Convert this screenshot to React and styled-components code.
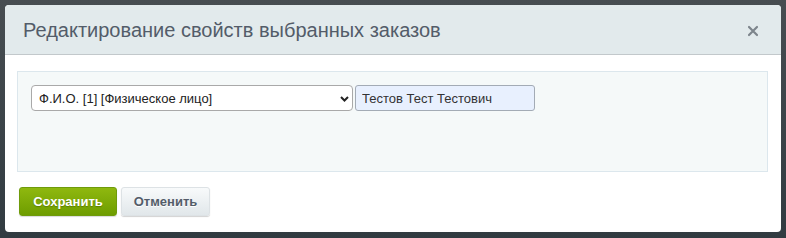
import React from 'react';
import styled, { createGlobalStyle } from 'styled-components';

const GlobalStyle = createGlobalStyle`
  html, body {
    margin: 0;
    padding: 0;
    background: linear-gradient(#474d51, #313b41);
    font-family: "Liberation Sans", Arial, sans-serif;
  }
`;

const Page = styled.div`
  width: 786px;
  height: 238px;
  box-sizing: border-box;
  padding: 5px 5px 0 5px;
`;

const Dialog = styled.div`
  width: 776px;
  height: 227px;
  background: #fff;
  border-radius: 4px;
  overflow: hidden;
  display: flex;
  flex-direction: column;
`;

const Header = styled.div`
  height: 49px;
  flex: none;
  display: flex;
  align-items: center;
  justify-content: space-between;
  padding: 0 22px 0 18px;
  background: #e2eaec;
  border-bottom: 1px solid #c2c8cb;
`;

const Title = styled.h1`
  margin: 0;
  font-size: 20px;
  font-weight: normal;
  color: #535c69;
  line-height: 1;
`;

const Close = styled.button`
  border: none;
  background: none;
  padding: 0;
  width: 12px;
  height: 12px;
  margin-top: 2px;
  display: flex;
  cursor: pointer;
`;

const Body = styled.div`
  padding: 16px 13px 0 12px;
`;

const Panel = styled.div`
  height: 99px;
  box-sizing: content-box;
  background: #f5f9f9;
  border: 1px solid #dce7ed;
  padding: 0 13px;
  display: flex;
  align-items: flex-start;
`;

const Row = styled.div`
  display: flex;
  gap: 2px;
  margin-top: 13px;
`;

const SelectWrap = styled.div`
  position: relative;
  width: 322px;
  height: 26px;
`;

const Select = styled.select`
  appearance: none;
  width: 100%;
  height: 100%;
  box-sizing: border-box;
  border: 1px solid #a9a9a9;
  border-radius: 4px;
  background: #fff;
  padding: 0 24px 0 7px;
  font-family: "Liberation Sans", Arial, sans-serif;
  font-size: 13px;
  color: #222;
  outline: none;
`;

const Chevron = styled.svg`
  position: absolute;
  right: 4px;
  top: 11px;
  pointer-events: none;
`;

const Input = styled.input`
  width: 180px;
  height: 26px;
  box-sizing: border-box;
  border: 1px solid #a3abb5;
  border-radius: 3px;
  background: #e8f0fe;
  padding: 0 6px;
  font-family: "Liberation Sans", Arial, sans-serif;
  font-size: 13px;
  color: #333;
  outline: none;
`;

const Buttons = styled.div`
  display: flex;
  gap: 4px;
  padding: 15px 0 0 14px;
`;

const Button = styled.button`
  height: 29px;
  box-sizing: border-box;
  border-radius: 3px;
  font-family: "Liberation Sans", Arial, sans-serif;
  font-size: 13px;
  font-weight: bold;
  cursor: pointer;
  padding: 0;
  width: ${(p) => p.$w}px;
  border: ${(p) => (p.$primary ? '1px solid #6f9b0b' : '1px solid #dde2e5')};
  color: ${(p) => (p.$primary ? '#fff' : '#535c69')};
  background: ${(p) =>
    p.$primary
      ? 'linear-gradient(#8fb80f, #6e9d00)'
      : 'linear-gradient(#f8fafb, #e1e7ea)'};
  text-shadow: ${(p) => (p.$primary ? '0 1px 1px rgba(0,0,0,0.25)' : '0 1px 0 #fff')};
  box-shadow: ${(p) =>
    p.$primary ? '0 1px 1px rgba(0,0,0,0.15)' : '0 1px 1px rgba(0,0,0,0.18)'};
`;

export default function App() {
  return (
    <>
      <GlobalStyle />
      <Page>
        <Dialog>
          <Header>
            <Title>Редактирование свойств выбранных заказов</Title>
            <Close aria-label="Закрыть">
              <svg width="12" height="12" viewBox="0 0 12 12">
                <path d="M2 2 L10 10 M10 2 L2 10" stroke="#7d858c" strokeWidth="2.2" strokeLinecap="round" />
              </svg>
            </Close>
          </Header>
          <Body>
            <Panel>
              <Row>
                <SelectWrap>
                  <Select defaultValue="fio">
                    <option value="fio">Ф.И.О. [1] [Физическое лицо]</option>
                  </Select>
                  <Chevron width="9" height="6" viewBox="0 0 9 6">
                    <path d="M1 1 L4.5 4.5 L8 1" fill="none" stroke="#222" strokeWidth="2" />
                  </Chevron>
                </SelectWrap>
                <Input defaultValue="Тестов Тест Тестович" />
              </Row>
            </Panel>
          </Body>
          <Buttons>
            <Button $primary $w={98}>Сохранить</Button>
            <Button $w={89}>Отменить</Button>
          </Buttons>
        </Dialog>
      </Page>
    </>
  );
}
